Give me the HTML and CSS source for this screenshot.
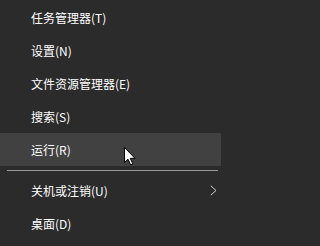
FILE: index.html
```html
<!DOCTYPE html>
<html lang="zh-CN">
<head>
<meta charset="utf-8">
<link rel="stylesheet" href="styles.css">
</head>
<body>
<div class="menu">
  <div class="item">任务管理器(T)</div>
  <div class="item">设置(N)</div>
  <div class="item">文件资源管理器(E)</div>
  <div class="item">搜索(S)</div>
  <div class="item hover">运行(R)</div>
  <div class="sep"></div>
  <div class="item">关机或注销(U)
    <svg class="chev" width="7" height="11" viewBox="0 0 7 11"><polyline points="0.8,0.8 6,5.5 0.8,10.2" fill="none" stroke="#d0d0d0" stroke-width="1"/></svg>
  </div>
  <div class="item">桌面(D)</div>
</div>
<svg class="cursor" width="13" height="19" viewBox="0 0 13 19"><path d="M0.5,0.5 L0.5,15.5 L4,12.2 L6.6,17.8 L8.8,16.8 L6.3,11.3 L11,11.3 Z" fill="#fff" stroke="#000" stroke-width="1" stroke-linejoin="miter"/></svg>
</body>
</html>
```
FILE: styles.css
```css
html, body {
  margin: 0;
  padding: 0;
  background: #2b2b2b;
  width: 221px;
  height: 246px;
  overflow: hidden;
}
.menu {
  padding-top: 1px;
  font-family: "Noto Sans CJK SC", "Noto Sans", sans-serif;
  font-size: 12px;
  color: #ffffff;
}
.item {
  height: 33px;
  display: flex;
  align-items: center;
  padding-left: 31px;
  padding-right: 4px;
  line-height: 1;
}
.hover {
  background: #414141;
}
.sep {
  height: 1px;
  background: #979797;
  margin: 4px 3px 3px 7px;
}
.chev {
  margin-left: auto;
}
.cursor {
  position: absolute;
  left: 123.5px;
  top: 146.5px;
}
```
